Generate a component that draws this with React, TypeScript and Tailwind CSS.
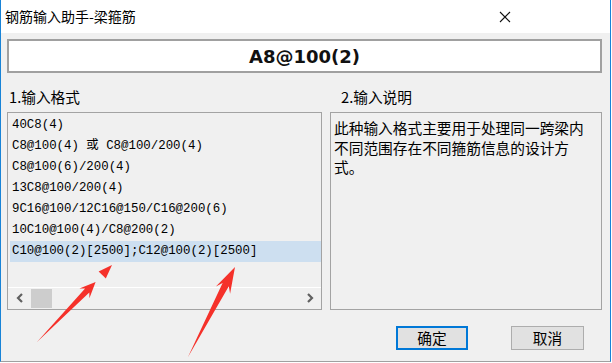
import React from 'react';

const rows = [
  '40C8(4)',
  'C8@100(4) 或 C8@100/200(4)',
  'C8@100(6)/200(4)',
  '13C8@100/200(4)',
  '9C16@100/12C16@150/C16@200(6)',
  '10C10@100(4)/C8@200(2)',
  'C10@100(2)[2500];C12@100(2)[2500]',
];

const cjk = { fontFamily: '"Noto Sans CJK SC", "Noto Sans", sans-serif' };
const mono = { fontFamily: '"Liberation Mono", "Noto Sans CJK SC", monospace' };

const Chevron = ({ dir }: { dir: 'left' | 'right' }) => (
  <svg width="8" height="10" viewBox="0 0 8 10">
    <polyline
      points={dir === 'left' ? '6,1 2,5 6,9' : '2,1 6,5 2,9'}
      fill="none"
      stroke="#606060"
      strokeWidth="2.2"
    />
  </svg>
);

export default function App() {
  return (
    <div className="relative w-[612px] h-[363px] bg-white overflow-hidden">
      <div className="w-[611px] h-[362px] flex flex-col bg-[#f0f0f0] border-l border-r border-b border-l-[#1883d7] border-r-[#1883d7] border-b-[#a0a0a0]">
        {/* title bar */}
        <div className="h-[33px] bg-white flex items-center justify-between pl-[4px]">
          <span className="text-[14px] text-black" style={cjk}>钢筋输入助手-梁箍筋</span>
          <div className="w-[46px] h-[33px] mr-[82px] flex items-center justify-center">
            <svg width="12" height="12" viewBox="0 0 12 12">
              <path d="M1 1L11 11M11 1L1 11" stroke="#111" strokeWidth="1.1" />
            </svg>
          </div>
        </div>

        <div className="flex flex-col pl-[6px] pr-[8px]">
          {/* result box */}
          <div className="mt-[6px] h-[34px] border-2 border-[#a0a0a0] bg-white flex items-center justify-center">
            <span className="text-[18px] font-bold text-[#111]" style={{ fontFamily: '"DejaVu Sans", sans-serif' }}>
              A8@100(2)
            </span>
          </div>

          <div className="flex gap-[8px] mt-[14px]">
            {/* left column */}
            <div className="w-[315px] flex flex-col">
              <div className="h-[20px] pl-[2px] text-[14.7px] leading-[20px] text-black" style={cjk}>1.输入格式</div>
              <div className="mt-[5px] h-[198px] border border-[#a3a3a3] flex flex-col">
                <div className="flex-1 pt-[2px] pl-[2px]">
                  {rows.map((r, i) => (
                    <div
                      key={i}
                      className={`h-[21px] pl-[2px] flex items-center text-[12.4px] text-black whitespace-pre ${
                        i === rows.length - 1 ? 'bg-[#cddff0]' : ''
                      }`}
                      style={mono}
                    >
                      {r}
                    </div>
                  ))}
                </div>
                <div className="h-[21px] mb-[1px] border-t border-white flex items-center">
                  <div className="w-[23px] flex items-center justify-center">
                    <Chevron dir="left" />
                  </div>
                  <div className="w-[21px] h-[19px] bg-[#cdcdcd]" />
                  <div className="flex-1" />
                  <div className="w-[22px] flex items-center justify-center">
                    <Chevron dir="right" />
                  </div>
                </div>
              </div>
            </div>

            {/* right column */}
            <div className="w-[272px] flex flex-col">
              <div className="h-[20px] pl-[11px] text-[14.7px] leading-[20px] text-black" style={cjk}>2.输入说明</div>
              <div className="mt-[5px] h-[198px] border border-[#a3a3a3] pt-[5px] pl-[3px] pr-[6px] text-[14.7px] leading-[19.5px] text-black" style={cjk}>
                此种输入格式主要用于处理同一跨梁内不同范围存在不同箍筋信息的设计方式。
              </div>
            </div>
          </div>

          {/* buttons */}
          <div className="mt-[16px] flex justify-end gap-[43px] pr-[18px]">
            <button className="w-[72px] h-[24px] border-2 border-[#0078d7] bg-[#e1e1e1] text-[14.7px] text-black flex items-center justify-center" style={cjk}>
              确定
            </button>
            <button className="w-[73px] h-[24px] border border-[#adadad] bg-[#e1e1e1] text-[14.7px] text-black flex items-center justify-center" style={cjk}>
              取消
            </button>
          </div>
        </div>
      </div>

      {/* red annotation arrows */}
      <svg className="absolute inset-0 pointer-events-none" width="612" height="363" viewBox="0 0 612 363">
        <polygon points="37,342 89.3,292.6 89.4,298.3 95.6,281.9 79.4,288.5 85.1,288.4" fill="#f5312a" />
        <polygon points="112,265 105.8,278.5 102.8,275.6 98.6,271.5" fill="#f5312a" />
        <polygon points="188,357 228.8,286.3 230.1,293.8 235,267 215.9,286.4 222.6,283.1" fill="#f5312a" />
      </svg>
    </div>
  );
}
